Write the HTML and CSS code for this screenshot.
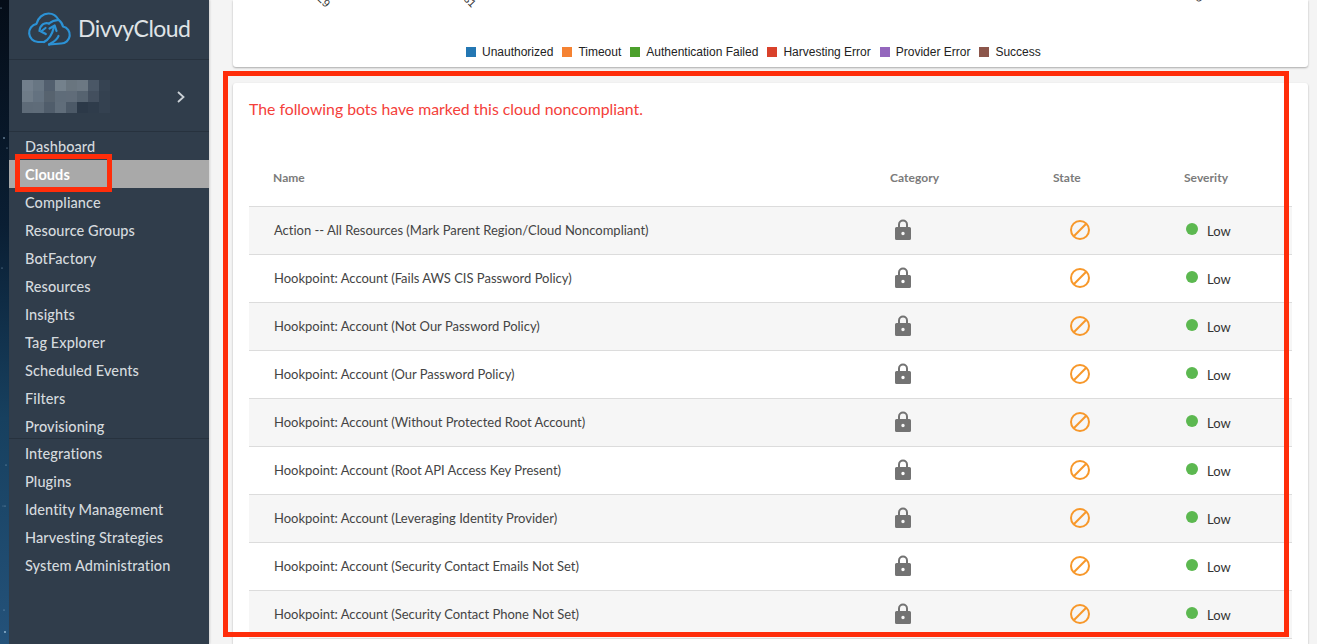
FILE: index.html
```html
<!DOCTYPE html>
<html lang="en">
<head>
<meta charset="utf-8">
<title>DivvyCloud - Clouds</title>
<link rel="stylesheet" href="styles.css">
</head>
<body>
<svg class="defs" width="0" height="0" aria-hidden="true">
  <symbol id="lock" viewBox="0 0 16 21">
    <path d="M4 9V5.500a4 4 0 0 1 8 0V9" fill="none" stroke="#737373" stroke-width="2"/>
    <path fill-rule="evenodd" fill="#737373" d="M1.500 8h13A1.500 1.500 0 0 1 16 9.500v10a1.500 1.500 0 0 1-1.500 1.500h-13A1.500 1.500 0 0 1 0 19.500v-10A1.500 1.500 0 0 1 1.500 8zM8 12.800a1.700 1.700 0 1 0 0 3.400a1.700 1.700 0 0 0 0-3.400z"/>
  </symbol>
  <symbol id="ban" viewBox="0 0 20 20">
    <circle cx="10" cy="10" r="9" fill="none" stroke="#f7982b" stroke-width="2"/>
    <path d="M3.800 16.200L16.200 3.800" stroke="#f7982b" stroke-width="2"/>
  </symbol>
</svg>

<div class="space">
  <svg width="9" height="644" viewBox="0 0 9 644" aria-hidden="true">
    <g fill="#9fc0d8">
      <circle cx="1" cy="8" r=".6"/><circle cx="4" cy="138" r=".8"/><circle cx="7" cy="148" r=".5"/>
      <circle cx="2" cy="268" r=".5"/><circle cx="5" cy="506" r=".5"/><circle cx="3" cy="506" r=".4"/>
      <circle cx="5" cy="632" r=".9"/><circle cx="6" cy="465" r=".5"/><circle cx="4" cy="610" r=".5"/>
    </g>
  </svg>
</div>

<aside class="sidebar">
  <div class="brand">
    <svg class="brand-icon" width="46" height="36" viewBox="0 0 46 36" aria-hidden="true">
      <g fill="none" stroke="#2c92d5" stroke-width="2.200" stroke-linecap="round" stroke-linejoin="round">
        <path d="M17 31H11A9.200 9.200 0 0 1 9.500 12.800C11 6.500 16 2.500 21.500 2.500C26 2.500 29.500 4.800 31.500 8.800C29 9 25.500 9.500 22 12.500"/>
        <path d="M22 33.500L34 32.500A8.600 8.600 0 0 0 36 15.500C35.500 12.800 34 10.500 31.500 8.800"/>
        <path d="M12.500 20C13 14 17.500 11 22 12.500"/>
        <path d="M17 31C21 29 25 24 27 16"/>
        <path d="M22.500 17.500L27.700 14.500L29.500 20"/>
        <path d="M18.500 17L14 20.500L18.800 23"/>
        <path d="M22 33.500C25 31.500 30 29.500 31.500 25"/>
      </g>
    </svg>
    <span class="brand-name">DivvyCloud</span>
  </div>
  <div class="account">
    <svg class="blur" width="88" height="33" viewBox="0 0 8 3" shape-rendering="crispEdges" aria-hidden="true">
      <rect x="0" y="0" width="1" height="1" fill="#727f8c"/><rect x="1" y="0" width="1" height="1" fill="#687683"/><rect x="2" y="0" width="1" height="1" fill="#525f6e"/><rect x="3" y="0" width="1" height="1" fill="#74818c"/><rect x="4" y="0" width="1" height="1" fill="#69757f"/><rect x="5" y="0" width="1" height="1" fill="#6c7883"/><rect x="6" y="0" width="1" height="1" fill="#4a5766"/><rect x="7" y="0" width="1" height="1" fill="#364352"/>
      <rect x="0" y="1" width="1" height="1" fill="#6f7c88"/><rect x="1" y="1" width="1" height="1" fill="#647280"/><rect x="2" y="1" width="1" height="1" fill="#57636f"/><rect x="3" y="1" width="1" height="1" fill="#5f6c79"/><rect x="4" y="1" width="1" height="1" fill="#606c79"/><rect x="5" y="1" width="1" height="1" fill="#566370"/><rect x="6" y="1" width="1" height="1" fill="#434f5e"/><rect x="7" y="1" width="1" height="1" fill="#344150"/>
      <rect x="0" y="2" width="1" height="1" fill="#5e6b78"/><rect x="1" y="2" width="1" height="1" fill="#5f6c79"/><rect x="2" y="2" width="1" height="1" fill="#505d6b"/><rect x="3" y="2" width="1" height="1" fill="#606d7a"/><rect x="4" y="2" width="1" height="1" fill="#4c5967"/><rect x="5" y="2" width="1" height="1" fill="#2c3948"/><rect x="6" y="2" width="1" height="1" fill="#2f3c4b"/><rect x="7" y="2" width="1" height="1" fill="#344150"/>
    </svg>
    <svg class="chevron" width="10" height="14" viewBox="0 0 10 14" aria-hidden="true">
      <path d="M2 2l5.500 5L2 12" fill="none" stroke="#ccd2d7" stroke-width="1.800"/>
    </svg>
  </div>
  <nav class="nav">
    <a class="nav-item">Dashboard</a>
    <a class="nav-item active">Clouds</a>
    <a class="nav-item">Compliance</a>
    <a class="nav-item">Resource Groups</a>
    <a class="nav-item">BotFactory</a>
    <a class="nav-item">Resources</a>
    <a class="nav-item">Insights</a>
    <a class="nav-item">Tag Explorer</a>
    <a class="nav-item">Scheduled Events</a>
    <a class="nav-item">Filters</a>
    <a class="nav-item last-group">Provisioning</a>
    <a class="nav-item">Integrations</a>
    <a class="nav-item">Plugins</a>
    <a class="nav-item">Identity Management</a>
    <a class="nav-item">Harvesting Strategies</a>
    <a class="nav-item">System Administration</a>
  </nav>
</aside>

<main class="main">
  <section class="card chart-card">
    <span class="tick tick-a">29</span>
    <span class="tick tick-b">31</span>
    <span class="tick tick-c">9</span>
    <ul class="legend">
      <li class="legend-item"><i class="swatch blue"></i>Unauthorized</li>
      <li class="legend-item"><i class="swatch orange"></i>Timeout</li>
      <li class="legend-item"><i class="swatch green"></i>Authentication Failed</li>
      <li class="legend-item"><i class="swatch red"></i>Harvesting Error</li>
      <li class="legend-item"><i class="swatch purple"></i>Provider Error</li>
      <li class="legend-item"><i class="swatch brown"></i>Success</li>
    </ul>
  </section>

  <section class="card bots-card">
    <h2 class="notice">The following bots have marked this cloud noncompliant.</h2>
    <div class="table">
      <div class="row head">
        <div class="cell">Name</div><div class="cell">Category</div><div class="cell">State</div><div class="cell">Severity</div>
      </div>
      <div class="row"><div class="cell name">Action -- All Resources (Mark Parent Region/Cloud Noncompliant)</div><div class="cell cat"><svg class="lock"><use href="#lock"/></svg></div><div class="cell st"><svg class="ban"><use href="#ban"/></svg></div><div class="cell sev"><i class="dot"></i><span class="low">Low</span></div></div>
      <div class="row"><div class="cell name">Hookpoint: Account (Fails AWS CIS Password Policy)</div><div class="cell cat"><svg class="lock"><use href="#lock"/></svg></div><div class="cell st"><svg class="ban"><use href="#ban"/></svg></div><div class="cell sev"><i class="dot"></i><span class="low">Low</span></div></div>
      <div class="row"><div class="cell name">Hookpoint: Account (Not Our Password Policy)</div><div class="cell cat"><svg class="lock"><use href="#lock"/></svg></div><div class="cell st"><svg class="ban"><use href="#ban"/></svg></div><div class="cell sev"><i class="dot"></i><span class="low">Low</span></div></div>
      <div class="row"><div class="cell name">Hookpoint: Account (Our Password Policy)</div><div class="cell cat"><svg class="lock"><use href="#lock"/></svg></div><div class="cell st"><svg class="ban"><use href="#ban"/></svg></div><div class="cell sev"><i class="dot"></i><span class="low">Low</span></div></div>
      <div class="row"><div class="cell name">Hookpoint: Account (Without Protected Root Account)</div><div class="cell cat"><svg class="lock"><use href="#lock"/></svg></div><div class="cell st"><svg class="ban"><use href="#ban"/></svg></div><div class="cell sev"><i class="dot"></i><span class="low">Low</span></div></div>
      <div class="row"><div class="cell name">Hookpoint: Account (Root API Access Key Present)</div><div class="cell cat"><svg class="lock"><use href="#lock"/></svg></div><div class="cell st"><svg class="ban"><use href="#ban"/></svg></div><div class="cell sev"><i class="dot"></i><span class="low">Low</span></div></div>
      <div class="row"><div class="cell name">Hookpoint: Account (Leveraging Identity Provider)</div><div class="cell cat"><svg class="lock"><use href="#lock"/></svg></div><div class="cell st"><svg class="ban"><use href="#ban"/></svg></div><div class="cell sev"><i class="dot"></i><span class="low">Low</span></div></div>
      <div class="row"><div class="cell name">Hookpoint: Account (Security Contact Emails Not Set)</div><div class="cell cat"><svg class="lock"><use href="#lock"/></svg></div><div class="cell st"><svg class="ban"><use href="#ban"/></svg></div><div class="cell sev"><i class="dot"></i><span class="low">Low</span></div></div>
      <div class="row"><div class="cell name">Hookpoint: Account (Security Contact Phone Not Set)</div><div class="cell cat"><svg class="lock"><use href="#lock"/></svg></div><div class="cell st"><svg class="ban"><use href="#ban"/></svg></div><div class="cell sev"><i class="dot"></i><span class="low">Low</span></div></div>
    </div>
  </section>
</main>

<div class="callout callout-nav"></div>
<div class="callout callout-table"></div>
</body>
</html>
```

FILE: styles.css
```css
* { box-sizing: border-box; }
html, body { height: 644px; margin: 0; overflow: hidden; }
body {
  display: flex;
  position: relative;
  background: #f4f4f4;
  font-family: Lato, "Open Sans", sans-serif;
  color: #333;
}
.defs { position: absolute; }

.space {
  flex: 0 0 9px;
  height: 644px;
  background: linear-gradient(180deg, #050d18 0%, #0a1e33 35%, #17405f 65%, #24527a 100%);
}
.space svg { display: block; }

.sidebar {
  flex: 0 0 200px;
  height: 644px;
  background: #303d4b;
  color: #d5dade;
  box-shadow: 1px 0 2px rgba(0,0,0,.15);
}
.brand {
  height: 60px;
  display: flex;
  align-items: center;
  padding: 0 0 0 18px;
  gap: 6px;
  border-bottom: 1px solid #27323e;
}
.brand-icon { display: block; margin-top: -2px; }
.brand-name {
  font-size: 23px;
  font-weight: 400;
  letter-spacing: -.55px;
  color: #dfe3e6;
  margin-top: -3px;
  margin-left: -1px;
}
.account {
  height: 72px;
  display: flex;
  align-items: center;
  justify-content: space-between;
  padding: 0 23px 0 13px;
  border-bottom: 1px solid #27323e;
}
.blur { display: block; margin-top: 2px; }
.chevron { display: block; margin-top: 3px; }

.nav { display: flex; flex-direction: column; }
.nav-item {
  height: 28px;
  line-height: 30px;
  padding-left: 16px;
  font-size: 14.500px;
  font-weight: 500;
  letter-spacing: .1px;
  color: #d5dade;
  white-space: nowrap;
}
.nav-item.active { background: #a9a9a9; color: #fff; font-weight: 700; }
.nav-item.last-group { border-bottom: 1px solid #27323e; height: 27px; line-height: 30px; }

.main {
  flex: 1;
  min-width: 0;
  padding: 0 9px 0 24px;
  display: flex;
  flex-direction: column;
  gap: 16px;
}
.card {
  background: #fff;
  border-radius: 3px;
  box-shadow: 0 1px 2px rgba(0,0,0,.3);
}
.chart-card {
  height: 67px;
  flex: none;
  position: relative;
  overflow: hidden;
  border-radius: 0 0 3px 3px;
}
.tick {
  position: absolute;
  top: -5px;
  font: 11px "Liberation Sans", Arial, sans-serif;
  color: #333;
  transform: rotate(45deg);
}
.tick-a { left: 85px; }
.tick-b { left: 231px; }
.tick-c { left: 964px; top: -8px; }

.legend {
  position: absolute;
  left: 233px;
  top: 45px;
  display: flex;
  margin: 0;
  padding: 0;
  list-style: none;
  font: 12px/15px "Liberation Sans", Arial, sans-serif;
  color: #222;
  gap: 9px;
}
.legend-item { display: flex; align-items: center; white-space: nowrap; }
.swatch { width: 10px; height: 10px; margin-right: 6px; display: block; margin-top: -1px; }
.blue { background: #2477b3; }
.orange { background: #f58232; }
.green { background: #4ca02c; }
.red { background: #d9412b; }
.purple { background: #9467bd; }
.brown { background: #8c564b; }

.bots-card {
  flex: 1;
  padding: 0 16px;
  border-radius: 3px 3px 0 0;
}
.notice {
  margin: 0;
  padding-top: 16px;
  height: 74px;
  font-size: 15.800px;
  line-height: 20px;
  font-weight: 400;
  color: #f4403a;
}
.table { width: 1043px; }
.row {
  display: grid;
  grid-template-columns: 617px 163px 131px 1fr;
  height: 48px;
  padding-bottom: 2px;
  border-bottom: 1px solid #dcdcdc;
  align-items: center;
  font-size: 13px;
}
.row:nth-child(even) { background: #f6f6f6; }
.row.head {
  height: 50px;
  font-size: 12px;
  font-weight: 700;
  color: #7b7b7b;
  background: none;
  padding-bottom: 8px;
}
.head .cell { padding-left: 24px; letter-spacing: .04px; }
.cell { display: flex; align-items: center; white-space: nowrap; }
.cell.name { padding-left: 25px; color: #444; letter-spacing: -.01px; }
.cell.cat { padding-left: 29px; }
.cell.st { padding-left: 41px; }
.cell.sev { padding-left: 26px; }
.lock { display: block; width: 16px; height: 21px; }
.ban { display: block; width: 20px; height: 20px; }
.dot { display: block; width: 12px; height: 12px; border-radius: 50%; background: #5cb850; margin-top: -1px; }
.low { margin-left: 9px; color: #333; margin-top: 3px; }

.callout { position: absolute; border: 5px solid #ff2d0a; pointer-events: none; }
.callout-nav { left: 15px; top: 154px; width: 97px; height: 38px; }
.callout-table { left: 223px; top: 71px; width: 1066px; height: 566px; }
```
